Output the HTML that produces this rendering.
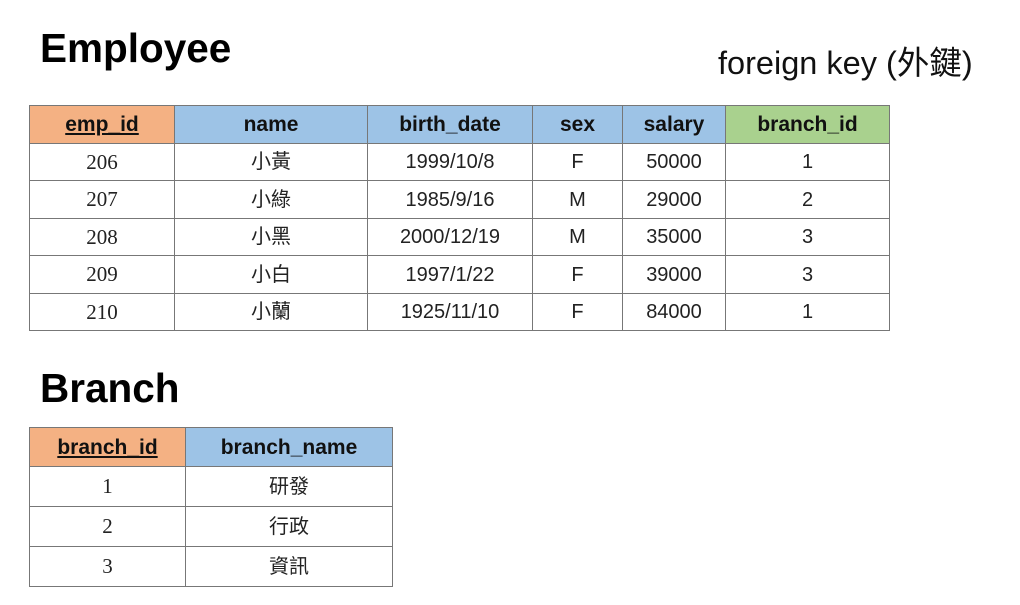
<!DOCTYPE html>
<html><head><meta charset="utf-8"><style>
body{margin:0;width:1020px;height:605px;background:#fff;position:relative;overflow:hidden;font-family:"Liberation Sans","Noto Sans CJK TC",sans-serif;}
.t{position:absolute;font-weight:bold;font-size:40.5px;color:#000;line-height:1;}
table{position:absolute;border-collapse:collapse;table-layout:fixed;}
td{border:1px solid #777;text-align:center;font-size:20px;color:#222;padding:0;line-height:1;vertical-align:middle;}
th{border:1px solid #777;font-size:21px;font-weight:bold;color:#111;padding:0;line-height:1;}
.o{background:#f4b183;text-decoration:underline;}
.b{background:#9dc3e6;}
.g{background:#a9d18e;}
.s{font-family:"Liberation Serif","Noto Serif CJK SC",serif;font-size:21px;}
.c{font-family:"Noto Sans CJK TC",sans-serif;}
.c span{display:inline-block;position:relative;top:-2px;}
</style></head><body>
<div class="t" style="left:40px;top:28px">Employee</div>
<div style="position:absolute;left:718px;top:47px;font-size:32.5px;line-height:1;color:#111">foreign key (外鍵)</div>
<table style="left:29px;top:105px;width:860px">
<colgroup><col style="width:145px"><col style="width:193px"><col style="width:165px"><col style="width:90px"><col style="width:103px"><col style="width:164px"></colgroup>
<tr style="height:38px"><th class="o">emp_id</th><th class="b">name</th><th class="b">birth_date</th><th class="b">sex</th><th class="b">salary</th><th class="g">branch_id</th></tr>
<tr style="height:37px"><td class="s">206</td><td class="c"><span>小黃</span></td><td>1999/10/8</td><td>F</td><td>50000</td><td>1</td></tr>
<tr style="height:38px"><td class="s">207</td><td class="c"><span>小綠</span></td><td>1985/9/16</td><td>M</td><td>29000</td><td>2</td></tr>
<tr style="height:37px"><td class="s">208</td><td class="c"><span>小黑</span></td><td>2000/12/19</td><td>M</td><td>35000</td><td>3</td></tr>
<tr style="height:38px"><td class="s">209</td><td class="c"><span>小白</span></td><td>1997/1/22</td><td>F</td><td>39000</td><td>3</td></tr>
<tr style="height:37px"><td class="s">210</td><td class="c"><span>小蘭</span></td><td>1925/11/10</td><td>F</td><td>84000</td><td>1</td></tr>
</table>
<div class="t" style="left:40px;top:368px">Branch</div>
<table style="left:29px;top:427px;width:363px">
<colgroup><col style="width:156px"><col style="width:207px"></colgroup>
<tr style="height:39px"><th class="o">branch_id</th><th class="b">branch_name</th></tr>
<tr style="height:40px"><td class="s">1</td><td class="c"><span>研發</span></td></tr>
<tr style="height:40px"><td class="s">2</td><td class="c"><span>行政</span></td></tr>
<tr style="height:40px"><td class="s">3</td><td class="c"><span>資訊</span></td></tr>
</table>
</body></html>
